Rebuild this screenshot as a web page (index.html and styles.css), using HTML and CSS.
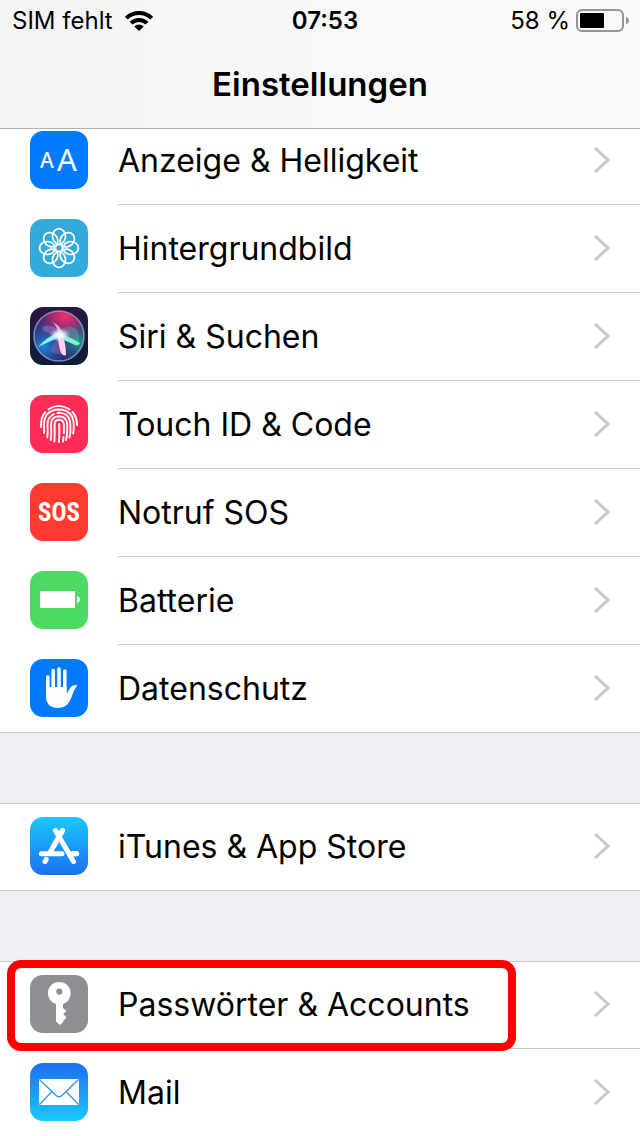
FILE: index.html
```html
<!DOCTYPE html>
<html lang="de">
<head>
<meta charset="utf-8">
<meta name="viewport" content="width=device-width, initial-scale=1">
<title>Einstellungen</title>
<link rel="stylesheet" href="styles.css">
</head>
<body>
<div class="screen">
  <header class="header">
    <div class="status">
      <div class="status-left">
        <span>SIM fehlt</span>
        <svg class="wifi" viewBox="0 0 28 20" aria-hidden="true">
          <g fill="none" stroke="#000" stroke-width="4">
            <path d="M1.3 7.2A18 18 0 0 1 26.7 7.2"/>
            <path d="M6 12.2A11.3 11.3 0 0 1 22 12.2"/>
          </g>
          <path d="M14 20L9.3 15.5A6.6 6.6 0 0 1 18.7 15.5Z"/>
        </svg>
      </div>
      <span class="time">07:53</span>
      <div class="status-right">
        <span>58 %</span>
        <svg class="battery" viewBox="0 0 54 24" aria-hidden="true">
          <rect x="1" y="1" width="46" height="21" rx="5" fill="none" stroke="#969696" stroke-width="2"/>
          <rect x="4" y="4" width="24" height="15" rx="1"/>
          <path d="M50 7.500Q53 9 53 11.500T50 15.500Z" fill="#969696"/>
        </svg>
      </div>
    </div>
    <h1 class="title">Einstellungen</h1>
  </header>

  <main class="list">
    <section class="group group-first">
      <a class="row" href="#anzeige">
        <svg class="icon" viewBox="0 0 58 58" aria-hidden="true">
          <rect width="58" height="58" rx="13" fill="#007aff"/>
          <text class="glyph-small" x="10" y="37">A</text>
          <text class="glyph-large" x="27" y="40">A</text>
        </svg>
        <span class="body"><span>Anzeige &amp; Helligkeit</span><svg class="chevron" viewBox="0 0 16 28"><path d="M1 2L14 14L1 26"/></svg></span>
      </a>
      <a class="row" href="#hintergrundbild">
        <svg class="icon" viewBox="0 0 58 58" aria-hidden="true">
          <rect width="58" height="58" rx="13" fill="#34aadc"/>
          <g fill="none" stroke="#fff" stroke-width="1.700">
            <ellipse cx="29" cy="17.300" rx="6.500" ry="7.700"/>
            <ellipse cx="29" cy="17.300" rx="6.500" ry="7.700" transform="rotate(45 29 29)"/>
            <ellipse cx="29" cy="17.300" rx="6.500" ry="7.700" transform="rotate(90 29 29)"/>
            <ellipse cx="29" cy="17.300" rx="6.500" ry="7.700" transform="rotate(135 29 29)"/>
            <ellipse cx="29" cy="17.300" rx="6.500" ry="7.700" transform="rotate(180 29 29)"/>
            <ellipse cx="29" cy="17.300" rx="6.500" ry="7.700" transform="rotate(225 29 29)"/>
            <ellipse cx="29" cy="17.300" rx="6.500" ry="7.700" transform="rotate(270 29 29)"/>
            <ellipse cx="29" cy="17.300" rx="6.500" ry="7.700" transform="rotate(315 29 29)"/>
            <circle cx="29" cy="29" r="3.500"/>
          </g>
        </svg>
        <span class="body"><span>Hintergrundbild</span><svg class="chevron" viewBox="0 0 16 28"><path d="M1 2L14 14L1 26"/></svg></span>
      </a>
      <a class="row" href="#siri">
        <svg class="icon" viewBox="0 0 58 58" aria-hidden="true">
          <defs>
            <linearGradient id="siri-bg" x1="0" y1="0" x2="0" y2="1">
              <stop offset="0" stop-color="#2b1644"/><stop offset="1" stop-color="#0c1d38"/>
            </linearGradient>
            <radialGradient id="siri-pink" cx=".62" cy=".1" r=".62">
              <stop offset="0" stop-color="#f0306c"/><stop offset=".5" stop-color="#b52870" stop-opacity=".8"/><stop offset="1" stop-color="#602c80" stop-opacity="0"/>
            </radialGradient>
            <radialGradient id="siri-blue" cx=".2" cy=".7" r=".6">
              <stop offset="0" stop-color="#168bd8"/><stop offset="1" stop-color="#243c92" stop-opacity="0"/>
            </radialGradient>
            <radialGradient id="siri-green" cx=".9" cy=".62" r=".45">
              <stop offset="0" stop-color="#1f9c8c"/><stop offset="1" stop-color="#1f6c8c" stop-opacity="0"/>
            </radialGradient>
            <radialGradient id="siri-glow">
              <stop offset="0" stop-color="#fff"/><stop offset=".45" stop-color="#e4f5ff" stop-opacity=".8"/><stop offset="1" stop-color="#b9c8ff" stop-opacity="0"/>
            </radialGradient>
          </defs>
          <rect width="58" height="58" rx="13" fill="url(#siri-bg)"/>
          <circle cx="29" cy="29" r="25" fill="#35246a"/>
          <circle cx="29" cy="29" r="25" fill="url(#siri-pink)"/>
          <circle cx="29" cy="29" r="25" fill="url(#siri-blue)"/>
          <circle cx="29" cy="29" r="25" fill="url(#siri-green)"/>
          <path d="M14 19Q27 17 31 28Q21 29 13 23Q11 20 14 19Z" fill="#d898d8" fill-opacity=".35"/>
          <path d="M28 26Q38 15 47 23Q51 32 47 35L31 30Z" fill="#7ab0bd" fill-opacity=".35"/>
          <path d="M28 29L20 44Q28 49 34 46Z" fill="#e668c8" fill-opacity=".3"/>
          <path d="M8 40Q18 29 29 25L33 29Q20 34 8 40Z" fill="#8cefff"/>
          <path d="M28 26Q40 30 50 36Q48 40 43 37L29 31Z" fill="#7df7cb"/>
          <path d="M27 28L33 28Q36 39 36 48Q32 50 30 43Z" fill="#ffd3f0"/>
          <path d="M28 28Q28 19 22 15Q31 18 33 28Z" fill="#f2c5ed" fill-opacity=".8"/>
          <ellipse cx="30" cy="28" rx="11" ry="7" fill="url(#siri-glow)"/>
          <circle cx="29" cy="29" r="25" fill="none" stroke="#98b1d8" stroke-opacity=".75" stroke-width="1.500"/>
        </svg>
        <span class="body"><span>Siri &amp; Suchen</span><svg class="chevron" viewBox="0 0 16 28"><path d="M1 2L14 14L1 26"/></svg></span>
      </a>
      <a class="row" href="#touchid">
        <svg class="icon" viewBox="0 0 58 58" aria-hidden="true">
          <rect width="58" height="58" rx="13" fill="#ff2d55"/>
          <g fill="none" stroke="#fff" stroke-width="1.900" stroke-linecap="round">
            <path d="M18.500 14.200Q28.500 7.500 39.500 14.200"/>
            <path d="M42.500 17Q46.800 21.500 47 30"/>
            <path d="M15.200 17.200Q10.800 21.500 11 32"/>
            <path d="M14 38V29Q14.500 15 29 14.500Q43 15 43.700 29Q44 34 43.200 38.500"/>
            <path d="M17.300 42.500Q18 38 17.500 31Q17 22 24 19"/>
            <path d="M27.500 18Q39.500 17 40.300 29Q41 37 39.500 42.500"/>
            <path d="M20.800 45Q21.700 38 21 30Q21 21.500 29 21.300Q37 21.500 37.200 30Q37.500 39 36 45"/>
            <path d="M24.400 46.500Q25 38 24.500 30Q24.500 24.800 29 24.700Q33.700 24.800 33.900 30V38"/>
            <path d="M33.500 42L33 46.500"/>
            <path d="M29 47Q29.700 38 29.200 29"/>
          </g>
        </svg>
        <span class="body"><span>Touch ID &amp; Code</span><svg class="chevron" viewBox="0 0 16 28"><path d="M1 2L14 14L1 26"/></svg></span>
      </a>
      <a class="row" href="#sos">
        <svg class="icon" viewBox="0 0 58 58" aria-hidden="true">
          <rect width="58" height="58" rx="13" fill="#ff3b30"/>
          <text class="glyph-sos" x="29" y="38">SOS</text>
        </svg>
        <span class="body"><span>Notruf SOS</span><svg class="chevron" viewBox="0 0 16 28"><path d="M1 2L14 14L1 26"/></svg></span>
      </a>
      <a class="row" href="#batterie">
        <svg class="icon" viewBox="0 0 58 58" aria-hidden="true">
          <rect width="58" height="58" rx="13" fill="#4cd964"/>
          <rect x="10" y="20" width="35" height="17" fill="#fff"/>
          <path d="M47 25Q50 26 50 28.500T47 32Z" fill="#fff"/>
        </svg>
        <span class="body"><span>Batterie</span><svg class="chevron" viewBox="0 0 16 28"><path d="M1 2L14 14L1 26"/></svg></span>
      </a>
      <a class="row row-last" href="#datenschutz">
        <svg class="icon" viewBox="0 0 58 58" aria-hidden="true">
          <rect width="58" height="58" rx="13" fill="#007aff"/>
          <g stroke="#fff" stroke-width="3.600" stroke-linecap="round">
            <path d="M17.800 18V34M23.200 11.500V32M29 10V32M34.800 12V32"/>
          </g>
          <path d="M16 28H36.600V34C38.500 33 39.500 28.500 42.500 26.800Q45.500 25.200 47.300 26.500C43.500 31 42.500 36.500 40 41.500Q36.500 49 28 49Q16 49 16 37Z" fill="#fff"/>
        </svg>
        <span class="body"><span>Datenschutz</span><svg class="chevron" viewBox="0 0 16 28"><path d="M1 2L14 14L1 26"/></svg></span>
      </a>
    </section>

    <section class="group">
      <a class="row row-last" href="#store">
        <svg class="icon" viewBox="0 0 58 58" aria-hidden="true">
          <defs>
            <linearGradient id="store-bg" x1="0" y1="0" x2="0" y2="1">
              <stop offset="0" stop-color="#1bc8fb"/><stop offset="1" stop-color="#1d6ff2"/>
            </linearGradient>
          </defs>
          <rect width="58" height="58" rx="13" fill="url(#store-bg)"/>
          <g fill="none" stroke="#fff" stroke-width="5" stroke-linecap="round">
            <path d="M32.500 13.500L20 35.500"/>
            <path d="M11.400 36.700H32M42 36.700H46.600"/>
            <path d="M16.200 42.500L15 44.500"/>
          </g>
          <path d="M29 19.500L42 42" stroke="#1d9bf6" stroke-width="7"/>
          <path d="M42 36.700H46.600M25.500 13.500L43.500 44.500M32.500 13.500L24 28.500" fill="none" stroke="#fff" stroke-width="5" stroke-linecap="round"/>
        </svg>
        <span class="body"><span>iTunes &amp; App Store</span><svg class="chevron" viewBox="0 0 16 28"><path d="M1 2L14 14L1 26"/></svg></span>
      </a>
    </section>

    <section class="group">
      <a class="row row-marked" href="#passwoerter">
        <svg class="icon" viewBox="0 0 58 58" aria-hidden="true">
          <rect width="58" height="58" rx="13" fill="#8e8e93"/>
          <path fill="#fff" fill-rule="evenodd" d="M29.300 7C35.500 7 40.600 11.500 40.600 18C40.600 23.500 37.500 27.500 33 29V33L36.500 36L33.300 39.300L36.500 42.500L33.500 45.500V46.500L30 50L26 46.500V29C21.300 27.500 18 23.500 18 18C18 11.500 23 7 29.300 7ZM29.300 13.500A3.100 3.100 0 1 0 29.300 19.700A3.100 3.100 0 1 0 29.300 13.500Z"/>
        </svg>
        <span class="body"><span>Passwörter &amp; Accounts</span><svg class="chevron" viewBox="0 0 16 28"><path d="M1 2L14 14L1 26"/></svg></span>
      </a>
      <a class="row row-last" href="#mail">
        <svg class="icon" viewBox="0 0 58 58" aria-hidden="true">
          <defs>
            <linearGradient id="mail-bg" x1="0" y1="0" x2="0" y2="1">
              <stop offset="0" stop-color="#1d6ff2"/><stop offset="1" stop-color="#1bc8fb"/>
            </linearGradient>
          </defs>
          <rect width="58" height="58" rx="13" fill="url(#mail-bg)"/>
          <rect x="9" y="16" width="40" height="26" rx="1" fill="#fff"/>
          <path d="M9.500 16.500L25.500 32Q29 35.500 32.500 32L48.500 16.500M9.500 41.500L21.500 29M48.500 41.500L36.500 29" fill="none" stroke="#2c93e6" stroke-width="1.200"/>
        </svg>
        <span class="body"><span>Mail</span><svg class="chevron" viewBox="0 0 16 28"><path d="M1 2L14 14L1 26"/></svg></span>
      </a>
    </section>
  </main>
</div>
</body>
</html>
```
FILE: styles.css
```css
*,
*::before,
*::after {
  box-sizing: border-box;
}

body {
  margin: 0;
  background: #efeff4;
  color: #000;
  font-family: Inter, "Liberation Sans", sans-serif;
}

.screen {
  display: flex;
  flex-direction: column;
  height: 100vh;
  overflow: hidden;
}

.header {
  flex: none;
  z-index: 1;
  border-bottom: 1px solid #b2b2b2;
  background: linear-gradient(90deg, #f4f4f5, #f9f9f9 60%);
}

.status {
  display: grid;
  grid-template-columns: 1fr auto 1fr;
  align-items: center;
  height: 41px;
  padding: 0 10px 0 12px;
  font-size: 24px;
  line-height: 41px;
}

.status-left,
.status-right {
  display: flex;
  align-items: center;
}

.status-left {
  gap: 12px;
}

.status-right {
  justify-content: flex-end;
  gap: 6px;
}

.time {
  padding-left: 8px;
  font-weight: 600;
}

.wifi {
  width: 28px;
  height: 20px;
}

.battery {
  width: 54px;
  height: 24px;
}

.title {
  margin: 0;
  height: 87px;
  font-size: 33px;
  font-weight: 600;
  line-height: 86px;
  text-align: center;
}

.list {
  flex: 1;
  min-height: 0;
}

.group {
  margin-top: 70px;
  background: #fff;
  box-shadow: inset 0 1px 0 #c8c7cc;
}

.group-first {
  margin-top: -12px;
}

.row {
  position: relative;
  display: flex;
  align-items: center;
  gap: 30px;
  height: 88px;
  padding-left: 30px;
  color: inherit;
  text-decoration: none;
}

.row-last {
  border-bottom: 1px solid #c8c7cc;
}

.icon {
  flex: none;
  width: 58px;
  height: 58px;
  margin-bottom: 2px;
}

.body {
  flex: 1;
  display: flex;
  align-items: center;
  justify-content: space-between;
  height: 88px;
  padding-right: 30px;
  border-bottom: 1px solid #c8c7cc;
  font-size: 32px;
  line-height: 40px;
}

.row-last .body {
  height: 87px;
  border-bottom: 0;
}

.chevron {
  flex: none;
  width: 16px;
  height: 28px;
  margin-bottom: 2px;
  fill: none;
  stroke: #c7c7cc;
  stroke-width: 3;
}

.row-marked::after {
  content: "";
  position: absolute;
  top: -1px;
  left: 7px;
  width: 509px;
  height: 91px;
  border: 8px solid #f00;
  border-radius: 14px;
  z-index: 1;
}

.glyph-small,
.glyph-large {
  fill: #fff;
  font-family: "Noto Sans", sans-serif;
}

.glyph-small {
  font-size: 21px;
  font-weight: 500;
}

.glyph-large {
  font-size: 31px;
}

.glyph-sos {
  fill: #fff;
  font-family: "Liberation Sans Narrow", "Roboto Condensed", Roboto, sans-serif;
  font-size: 25px;
  font-weight: 700;
  text-anchor: middle;
}
```
